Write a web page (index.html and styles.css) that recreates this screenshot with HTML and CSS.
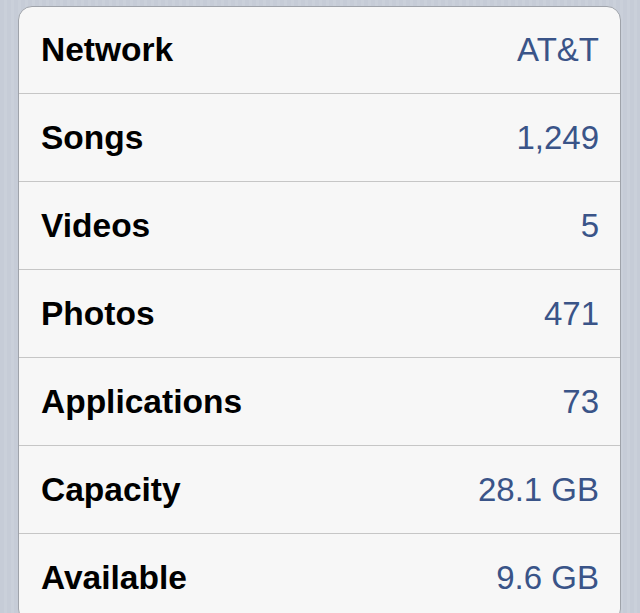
FILE: index.html
```html
<!DOCTYPE html>
<html lang="en">
<head>
    <meta charset="UTF-8">
    <meta name="viewport" content="width=device-width, initial-scale=1.0">
    <title>About</title>
    <link rel="stylesheet" href="styles.css">
</head>
<body>
    <!-- About table -->
    <div class="group">
        <div class="row"><span class="label">Network</span><span class="value">AT&amp;T</span></div>
        <div class="row"><span class="label">Songs</span><span class="value">1,249</span></div>
        <div class="row"><span class="label">Videos</span><span class="value">5</span></div>
        <div class="row"><span class="label">Photos</span><span class="value">471</span></div>
        <div class="row"><span class="label">Applications</span><span class="value">73</span></div>
        <div class="row"><span class="label">Capacity</span><span class="value">28.1 GB</span></div>
        <div class="row"><span class="label">Available</span><span class="value">9.6 GB</span></div>
    </div>
</body>
</html>
```

FILE: styles.css
```css
html, body {
    height: 100%;
}

body {
    margin: 0;
    overflow: hidden;
    font-family: "Liberation Sans", Arial, sans-serif;
    background: repeating-linear-gradient(90deg, #c6ccd7 0, #c6ccd7 4px, #cad0da 4px, #cad0da 7px);
}

.group {
    margin: 6px 19px 0 18px;
    background-color: #f7f7f7;
    border: 1px solid #9fa3aa;
    border-radius: 14px;
}

.row {
    display: flex;
    justify-content: space-between;
    align-items: center;
    height: 87px;
    padding: 0 21px 0 22px;
    border-bottom: 1px solid #c6c6c6;
}

.row:first-child {
    height: 86px;
}

.label {
    font-size: 33.5px;
    font-weight: bold;
    color: #000;
}

.value {
    font-size: 33px;
    color: #3a5488;
}
```
